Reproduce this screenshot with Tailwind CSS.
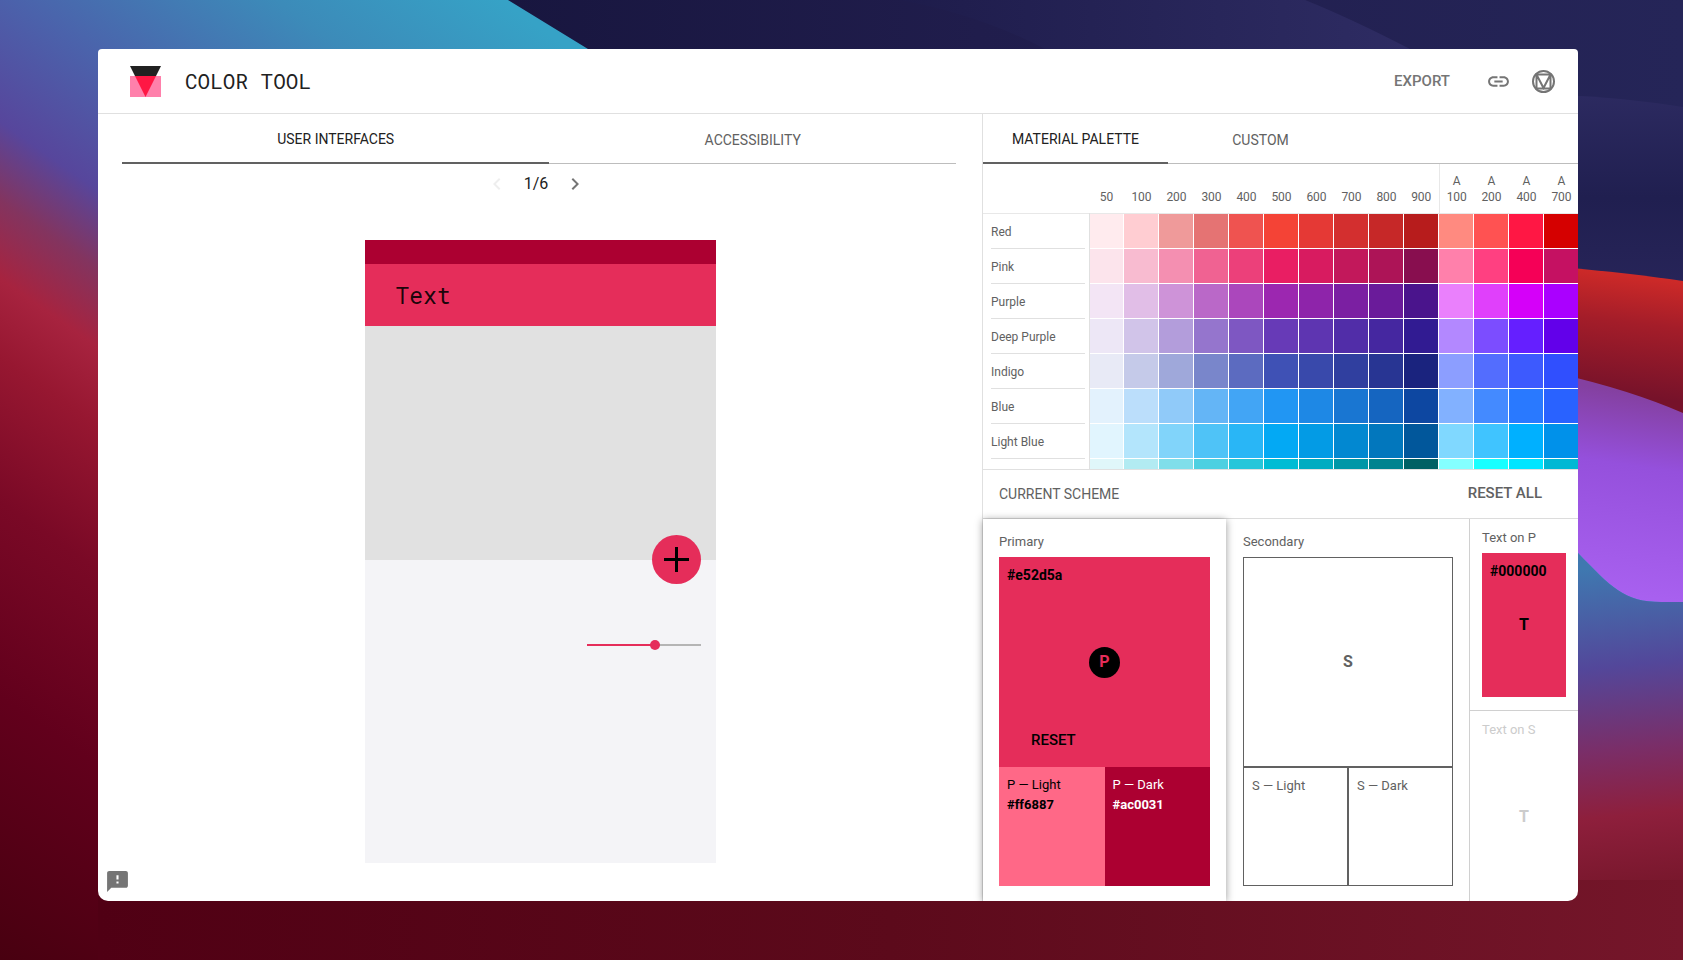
<!DOCTYPE html>
<html lang="en">
<head>
    <meta charset="UTF-8">
    <meta name="viewport" content="width=device-width, initial-scale=1.0">
    <title>Color Tool</title>
    <script src="https://cdn.jsdelivr.net/npm/@tailwindcss/browser@4"></script>
</head>
<body class="relative flex min-h-screen bg-[#4c0012] pt-[49px] pr-[105px] pb-[59px] pl-[98px] font-['Roboto',sans-serif] text-sm text-[#616161]">

    <!-- Wallpaper -->
    <svg class="absolute inset-0 h-full w-full" viewBox="0 0 1683 960" preserveAspectRatio="none" aria-hidden="true">
        <defs>
            <linearGradient id="left" gradientUnits="userSpaceOnUse" x1="500" y1="0" x2="-115" y2="879">
                <stop offset="0" stop-color="#36a2c6"/>
                <stop offset=".12" stop-color="#3c8bb9"/>
                <stop offset=".26" stop-color="#4b62ab"/>
                <stop offset=".36" stop-color="#57469c"/>
                <stop offset=".42" stop-color="#83345f"/>
                <stop offset=".48" stop-color="#a7233f"/>
                <stop offset=".54" stop-color="#971731"/>
                <stop offset=".65" stop-color="#7a0926"/>
                <stop offset=".8" stop-color="#62001c"/>
                <stop offset="1" stop-color="#480010"/>
            </linearGradient>
            <linearGradient id="bottom" x1="0" y1="0" x2="1" y2="0">
                <stop offset="0" stop-color="#500014"/>
                <stop offset=".5" stop-color="#5c0a1b"/>
                <stop offset="1" stop-color="#75162a"/>
            </linearGradient>
            <linearGradient id="navy" x1="0" y1="0" x2="1" y2="0">
                <stop offset="0" stop-color="#18163f"/>
                <stop offset=".4" stop-color="#201d4c"/>
                <stop offset="1" stop-color="#252558"/>
            </linearGradient>
            <linearGradient id="ribbon" x1="0" y1="0" x2="1" y2="0">
                <stop offset="0" stop-color="#1e1c4b"/>
                <stop offset="1" stop-color="#2e2c63"/>
            </linearGradient>
            <linearGradient id="fold" x1="0" y1="0" x2="0" y2="1">
                <stop offset="0" stop-color="#2c2a60"/>
                <stop offset=".5" stop-color="#201f50"/>
                <stop offset="1" stop-color="#28255a"/>
            </linearGradient>
            <linearGradient id="red" gradientUnits="userSpaceOnUse" x1="1600" y1="270" x2="1585" y2="390">
                <stop offset="0" stop-color="#ce2a28"/>
                <stop offset=".4" stop-color="#a41d29"/>
                <stop offset="1" stop-color="#76122a"/>
            </linearGradient>
            <linearGradient id="violet" gradientUnits="userSpaceOnUse" x1="1650" y1="395" x2="1620" y2="600">
                <stop offset="0" stop-color="#8440a0"/>
                <stop offset=".35" stop-color="#9550dc"/>
                <stop offset="1" stop-color="#a961f0"/>
            </linearGradient>
            <linearGradient id="right" gradientUnits="userSpaceOnUse" x1="1578" y1="570" x2="1610" y2="900">
                <stop offset="0" stop-color="#3f78b0"/>
                <stop offset=".3" stop-color="#53479a"/>
                <stop offset=".55" stop-color="#7a2e68"/>
                <stop offset=".75" stop-color="#8e1f3c"/>
                <stop offset="1" stop-color="#75162a"/>
            </linearGradient>
        </defs>
        <rect width="1683" height="960" fill="url(#left)"/>
        <path d="M98 880H1683V960H98Z" fill="url(#bottom)"/>
        <path d="M508 0L588 49L700 120H1683V0Z" fill="url(#navy)"/>
        <path d="M900 0Q980 15 1045 49H1410Q1350 18 1305 0Z" fill="url(#ribbon)"/>
        <path d="M1560 95Q1620 97 1683 107V300H1560Z" fill="url(#fold)"/>
        <path d="M1560 267Q1630 273 1683 281V430H1560Z" fill="url(#red)"/>
        <path d="M1560 540V600L1683 640V880H1560Z" fill="url(#right)"/>
        <path d="M1560 374Q1630 390 1683 413V602H1665C1625 603 1612 588 1578 553L1560 530Z" fill="url(#violet)"/>
        <path d="M1560 530L1578 553C1612 588 1625 603 1665 602H1683V700H1560Z" fill="url(#right)"/>
    </svg>

    <div class="relative flex flex-1 flex-col overflow-hidden rounded-t-[4px] rounded-b-[10px] bg-white">

        <header class="flex h-[65px] items-center border-b border-[#e0e0e0] pr-[23px] pl-8">
            <svg class="size-[31px]" viewBox="0 0 31 31" aria-hidden="true">
                <path d="M0 0H31L15.500 31Z" fill="#212121"/>
                <path d="M0 10H31V31H0Z" fill="#ff80ab"/>
                <path d="M5 10H26L15.500 31Z" fill="#ff1744"/>
            </svg>
            <h1 class="ml-6 font-['Roboto_Mono','DejaVu_Sans_Mono',monospace] text-[21px] text-[#212121]">COLOR TOOL</h1>
            <button class="ml-auto pt-[2px] text-[15px] font-medium text-[#757575]">EXPORT</button>
            <button class="ml-9 text-[#757575]" aria-label="Copy link">
                <svg class="size-[25px]" viewBox="0 0 24 24" fill="currentColor"><path d="M3.900 12c0-1.710 1.390-3.100 3.100-3.100h4V7H7c-2.760 0-5 2.240-5 5s2.240 5 5 5h4v-1.900H7c-1.710 0-3.100-1.390-3.100-3.100zM8 13h8v-2H8v2zm9-6h-4v1.900h4c1.710 0 3.100 1.390 3.100 3.100s-1.390 3.100-3.100 3.100h-4V17h4c2.760 0 5-2.240 5-5s-2.240-5-5-5z"/></svg>
            </button>
            <a href="#" class="ml-[21px] text-[#757575]" aria-label="Material Design">
                <svg class="size-[23px]" viewBox="0 0 23 23" fill="none" stroke="currentColor" stroke-width="2"><circle cx="11.500" cy="11.500" r="10.500"/><path d="M4.500 4.500H18.500V18.500H4.500ZM4.500 4.500L11.500 18L18.500 4.500"/></svg>
            </a>
        </header>

        <div class="flex flex-1">

            <!-- Preview -->
            <main class="flex flex-1 flex-col">
                <nav class="mr-[26px] ml-6 flex h-[50px] text-sm">
                    <button class="flex-auto border-b-2 border-[#616161] pt-[2px] text-[#212121]">USER INTERFACES</button>
                    <button class="flex-auto border-b border-[#bdbdbd] pt-[2px]">ACCESSIBILITY</button>
                </nav>
                <div class="flex h-10 items-center justify-center gap-[15px] pr-2 text-base text-[#212121]">
                    <button disabled class="text-[#eeeeee]" aria-label="Previous">
                        <svg class="size-6" viewBox="0 0 24 24" fill="currentColor"><path d="M15.410 7.410L14 6l-6 6 6 6 1.410-1.410L10.830 12z"/></svg>
                    </button>
                    <span>1/6</span>
                    <button class="text-[#757575]" aria-label="Next">
                        <svg class="size-6" viewBox="0 0 24 24" fill="currentColor"><path d="M10 6L8.590 7.410 13.170 12l-4.580 4.590L10 18l6-6z"/></svg>
                    </button>
                </div>
                <div class="mx-auto mt-9 flex w-[351px] flex-1 flex-col bg-[#f4f4f7]">
                    <div class="h-6 bg-[#ac0031]"></div>
                    <div class="flex h-[62px] items-center bg-[#e52d5a] pl-[31px] font-['Roboto_Mono','DejaVu_Sans_Mono',monospace] text-[23px] text-black/90">Text</div>
                    <div class="relative h-[234px] bg-[#e1e1e1]">
                        <button class="absolute right-[15px] -bottom-6 flex size-[49px] items-center justify-center rounded-full bg-[#e52d5a] text-black" aria-label="Add">
                            <svg class="size-[25px]" viewBox="0 0 25 25" fill="none" stroke="currentColor" stroke-width="3"><path d="M0 12.500H25M12.500 0V25"/></svg>
                        </button>
                    </div>
                    <input type="range" value="61" aria-label="Amount" class="mt-20 mr-[15px] ml-auto h-[10px] w-[114px] appearance-none bg-transparent [&::-webkit-slider-runnable-track]:h-[2px] [&::-webkit-slider-runnable-track]:bg-[linear-gradient(90deg,#e52d5a_60%,#b5b5b5_60%)] [&::-webkit-slider-thumb]:-mt-1 [&::-webkit-slider-thumb]:size-[10px] [&::-webkit-slider-thumb]:appearance-none [&::-webkit-slider-thumb]:rounded-full [&::-webkit-slider-thumb]:bg-[#e52d5a]">
                </div>
                <button class="mt-[6px] mb-[7px] ml-[7px] self-start text-[#757575]" aria-label="Send feedback">
                    <svg class="size-[25px]" viewBox="0 0 24 24" fill="currentColor"><path d="M20 2H4c-1.100 0-1.990.9-1.990 2L2 22l4-4h14c1.100 0 2-.9 2-2V4c0-1.100-.9-2-2-2zm-7 12h-2v-2h2v2zm0-4h-2V6h2v4z"/></svg>
                </button>
            </main>

            <!-- Palette and scheme -->
            <aside class="flex w-[596px] flex-col border-l border-[#e0e0e0]">
                <nav class="flex h-[50px] text-sm">
                    <button class="w-[185px] border-b-2 border-[#616161] pt-[2px] text-[#212121]">MATERIAL PALETTE</button>
                    <button class="w-[185px] border-b border-[#bdbdbd] pt-[2px]">CUSTOM</button>
                    <div class="flex-1 border-b border-[#bdbdbd]"></div>
                </nav>

                <div class="h-[306px] overflow-hidden border-b border-[#e0e0e0]">
                    <table class="w-[596px] table-fixed border-collapse text-xs">
                        <thead>
                            <tr id="shades" class="h-[49px] border-b border-[#e8e8e8] align-bottom leading-4"></tr>
                        </thead>
                        <tbody id="palette"></tbody>
                    </table>
                </div>

                <div class="flex h-12 items-center justify-between pr-9 pl-4">
                    <h2>CURRENT SCHEME</h2>
                    <button class="text-[15px] font-medium">RESET ALL</button>
                </div>

                <div class="flex flex-1 border-t border-[#dcdcdc] text-[13px]">
                    <section class="flex w-[243px] flex-col px-4 pt-3 pb-[15px] shadow-[0_1px_8px_rgba(0,0,0,0.4)]">
                        <h3 class="h-[26px] leading-[22px]">Primary</h3>
                        <div class="relative flex h-[210px] items-center justify-center bg-[#e52d5a] text-sm text-black">
                            <span class="absolute top-2 left-2 font-bold">#e52d5a</span>
                            <span class="flex size-[31px] items-center justify-center rounded-full bg-black text-base font-bold text-[#e52d5a]">P</span>
                            <button class="absolute bottom-4 left-8 text-[15px] font-medium">RESET</button>
                        </div>
                        <div class="flex flex-1 leading-5">
                            <div class="flex-1 bg-[#ff6887] p-2 text-black">P — Light<br><b>#ff6887</b></div>
                            <div class="flex-1 bg-[#ac0031] p-2 text-white">P — Dark<br><b>#ac0031</b></div>
                        </div>
                    </section>
                    <section class="flex w-[244px] flex-col border-r border-[#d0d0d0] pt-3 pr-4 pb-[15px] pl-[17px]">
                        <h3 class="h-[26px] leading-[22px]">Secondary</h3>
                        <div class="flex h-[210px] items-center justify-center border border-[#616161] text-base font-bold">S</div>
                        <div class="flex flex-1 leading-5">
                            <div class="flex-1 border border-[#616161] p-2">S — Light</div>
                            <div class="flex-1 border border-[#616161] p-2">S — Dark</div>
                        </div>
                    </section>
                    <div class="flex flex-1 flex-col">
                        <section class="h-[192px] border-b border-[#d0d0d0] px-3 pt-2">
                            <h3 class="h-[26px] leading-[22px]">Text on P</h3>
                            <div class="relative flex h-[144px] items-center justify-center bg-[#e52d5a] text-base font-bold text-black">
                                <span class="absolute top-2 left-2 text-sm">#000000</span>T
                            </div>
                        </section>
                        <section class="px-3 pt-2 text-[#cccccc]">
                            <h3 class="h-[26px] leading-[22px]">Text on S</h3>
                            <div class="flex h-[144px] items-center justify-center text-base font-bold">T</div>
                        </section>
                    </div>
                </div>
            </aside>
        </div>
    </div>

    <script>
        const shades = ['50', '100', '200', '300', '400', '500', '600', '700', '800', '900', 'A 100', 'A 200', 'A 400', 'A 700'];

        const palette = {
            'Red': ['#ffebee', '#ffcdd2', '#ef9a9a', '#e57373', '#ef5350', '#f44336', '#e53935', '#d32f2f', '#c62828', '#b71c1c', '#ff8a80', '#ff5252', '#ff1744', '#d50000'],
            'Pink': ['#fce4ec', '#f8bbd0', '#f48fb1', '#f06292', '#ec407a', '#e91e63', '#d81b60', '#c2185b', '#ad1457', '#880e4f', '#ff80ab', '#ff4081', '#f50057', '#c51162'],
            'Purple': ['#f3e5f5', '#e1bee7', '#ce93d8', '#ba68c8', '#ab47bc', '#9c27b0', '#8e24aa', '#7b1fa2', '#6a1b9a', '#4a148c', '#ea80fc', '#e040fb', '#d500f9', '#aa00ff'],
            'Deep Purple': ['#ede7f6', '#d1c4e9', '#b39ddb', '#9575cd', '#7e57c2', '#673ab7', '#5e35b1', '#512da8', '#4527a0', '#311b92', '#b388ff', '#7c4dff', '#651fff', '#6200ea'],
            'Indigo': ['#e8eaf6', '#c5cae9', '#9fa8da', '#7986cb', '#5c6bc0', '#3f51b5', '#3949ab', '#303f9f', '#283593', '#1a237e', '#8c9eff', '#536dfe', '#3d5afe', '#304ffe'],
            'Blue': ['#e3f2fd', '#bbdefb', '#90caf9', '#64b5f6', '#42a5f5', '#2196f3', '#1e88e5', '#1976d2', '#1565c0', '#0d47a1', '#82b1ff', '#448aff', '#2979ff', '#2962ff'],
            'Light Blue': ['#e1f5fe', '#b3e5fc', '#81d4fa', '#4fc3f7', '#29b6f6', '#03a9f4', '#039be5', '#0288d1', '#0277bd', '#01579b', '#80d8ff', '#40c4ff', '#00b0ff', '#0091ea'],
            'Cyan': ['#e0f7fa', '#b2ebf2', '#80deea', '#4dd0e1', '#26c6da', '#00bcd4', '#00acc1', '#0097a7', '#00838f', '#006064', '#84ffff', '#18ffff', '#00e5ff', '#00b8d4']
        };

        // Column headings, with a rule in front of the accent shades
        document.getElementById('shades').innerHTML = '<td class="w-[106px]"></td>' + shades.map(shade => `
            <th scope="col" class="px-1 pb-2 font-normal ${shade === 'A 100' ? 'border-l border-[#e8e8e8]' : ''}">${shade}</th>`).join('');

        // One row of swatches per hue
        document.getElementById('palette').innerHTML = Object.entries(palette).map(([name, colors]) => `
            <tr class="h-[35px]">
                <th scope="row" class="border-r border-[#e0e0e0] p-0 pr-1 pl-2 text-left font-normal">
                    <div class="h-[35px] border-b border-[#e0e0e0] leading-9">${name}</div>
                </th>
                ${colors.map((color, i) => `
                    <td class="p-0 pr-px pb-px"><button class="block h-[34px] w-full" style="background-color: ${color}" aria-label="${name} ${shades[i]}"></button></td>`).join('')}
            </tr>`).join('');
    </script>
</body>
</html>
